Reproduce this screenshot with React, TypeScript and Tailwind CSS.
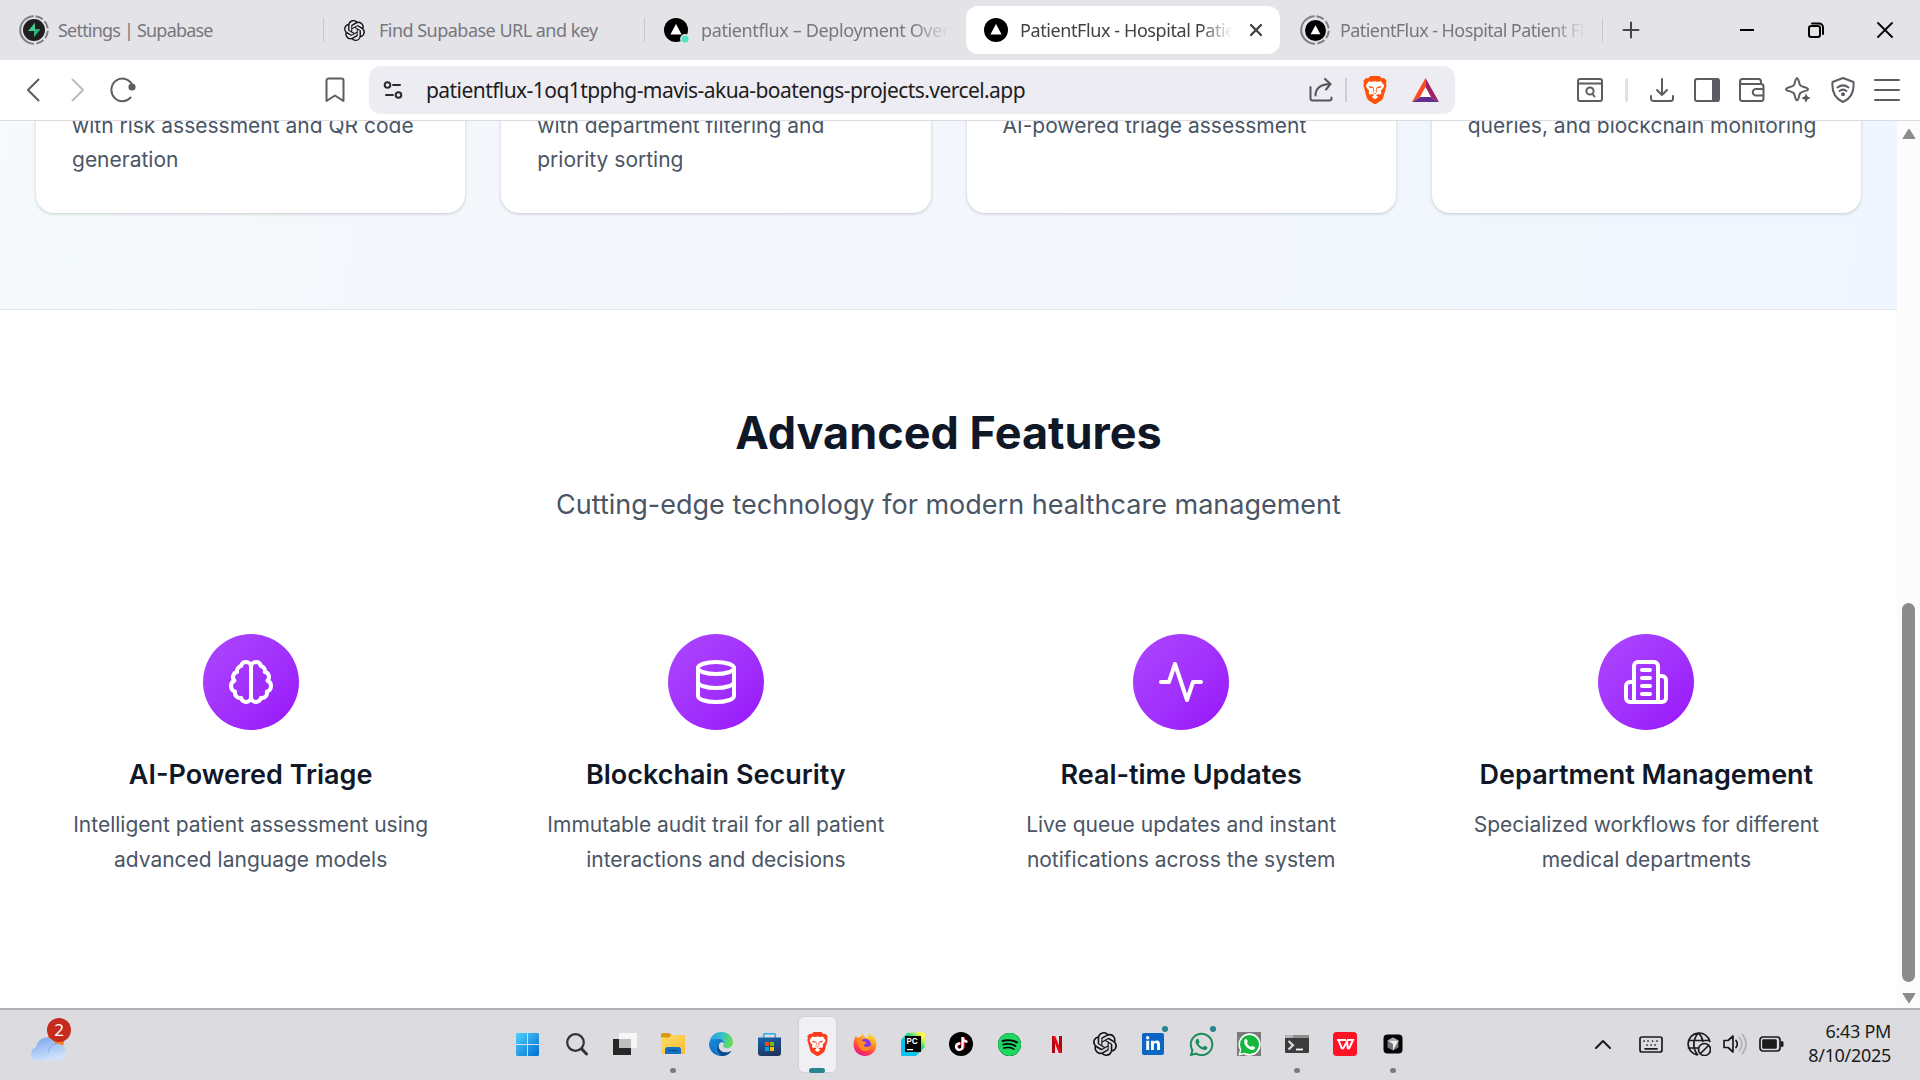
import React from "react";
import { SiSpotify, SiTiktok, SiOpenai } from "react-icons/si";
import { FaWhatsapp, FaLinkedinIn } from "react-icons/fa";

type IconProps = { className?: string; children: React.ReactNode; w?: number; h?: number; box?: string; sw?: number; color?: string };
const Svg = ({ children, w = 24, h = 24, box = "0 0 24 24", sw = 2, color = "currentColor", className }: IconProps) => (
  <svg width={w} height={h} viewBox={box} fill="none" stroke={color} strokeWidth={sw} strokeLinecap="round" strokeLinejoin="round" className={"shrink-0 " + (className ?? "")}>
    {children}
  </svg>
);

const BraveLion = ({ w, h, color, className }: { w: number; h: number; color: string; className?: string }) => (
  <svg width={w} height={h} viewBox="0 0 24 28" preserveAspectRatio="none" className={"shrink-0 " + (className ?? "")}>
    <path d="M7.500 0h9l2.300 2.300 2.200-.4L23.700 5 23 7.200l.6 2-3.400 12.600c-.4 1.300-1 2-2 2.700L12.800 28h-1.600l-5.400-3.500c-1-.7-1.600-1.400-2-2.700L.4 9.200l.6-2L.3 5 3 1.900l2.200.4z" fill={color} />
    <path d="M6 5.300l2.800.4L12 5.200l3.200.5 2.800-.4 3.200 4.300-.7 2-2.700 3.200.6 2.200-1.400 1.800-2.200-.7-1.800 1.200 2.300 1.600L12 23.300l-3.300-2.400 2.300-1.600-1.800-1.200-2.200.7-1.400-1.800.6-2.200-2.700-3.200-.7-2z" fill="#fff" />
    <path d="M5.700 10.100l4.500.9-.9 1.300-2.600-.4zM18.300 10.100l-4.500.9.9 1.300 2.600-.4zM9.900 16.600l2.100.6 2.100-.6-2.100 1.700z" fill={color} />
    <path d="M10.300 11.500l.5 3.500-1 1.500M13.700 11.500l-.5 3.500 1 1.500" stroke={color} strokeWidth=".8" fill="none" />
  </svg>
);

const VercelMark = ({ size = 24, dot = false }: { size?: number; dot?: boolean }) => (
  <svg width={size} height={size} viewBox="0 0 24 24" className="shrink-0 overflow-visible">
    <circle cx="12" cy="12" r="12" fill="#000" />
    <path d="M12 6l5.600 10.400H6.400z" fill="#fff" />
    {dot && <circle cx="21" cy="21" r="4.200" fill="#50e3c2" stroke="#e4e3e8" strokeWidth="1.400" />}
  </svg>
);

const Ringed = ({ children }: { children: React.ReactNode }) => (
  <div className="grid h-[30px] w-[30px] shrink-0 place-items-center">
    <svg width="30" height="30" viewBox="0 0 30 30" className="col-start-1 row-start-1">
      <circle cx="15" cy="15" r="13.800" fill="none" stroke="#808086" strokeWidth="2" strokeDasharray="8 2.400 8 2.400 8 2.400 8 2.400 42.700 2.400" transform="rotate(-84 15 15)" />
    </svg>
    <div className="col-start-1 row-start-1">{children}</div>
  </div>
);

const Tab = ({ icon, title, className, textClass }: { icon: React.ReactNode; title: string; className: string; textClass: string }) => (
  <div className={"flex h-12 shrink-0 items-center " + className}>
    {icon}
    <span className={"overflow-hidden whitespace-nowrap text-[18px] leading-6 " + textClass}>{title}</span>
  </div>
);

const fade = "[mask-image:linear-gradient(to_right,#000_85%,transparent)]";

const TabStrip = () => (
  <div className="flex h-[60px] shrink-0 items-center bg-[#e4e3e8] text-[#77777c]">
    <Tab
      className="w-[323px] pl-[19px]"
      textClass="ml-[9px] tracking-[-0.8px]"
      title="Settings | Supabase"
      icon={
        <Ringed>
          <svg width="22" height="22" viewBox="0 0 22 22">
            <circle cx="11" cy="11" r="11" fill="#1f1f1f" />
            <path d="M12 3.800v6.400h5.200L11 18v-6H5z" fill="#3ecf8e" />
            <path d="M11 12v6l6.200-7.800h-3z" fill="#2fae76" />
          </svg>
        </Ringed>
      }
    />
    <div className="h-6 w-px bg-[#c9c8cf]" />
    <Tab className="w-[320px] pl-[20px]" textClass="ml-[14px] tracking-[-0.52px]" title="Find Supabase URL and key" icon={<SiOpenai size={21} color="#111" />} />
    <div className="h-6 w-px bg-[#c9c8cf]" />
    <Tab className="w-[321px] pl-[19px]" textClass={"ml-[13px] w-[248px] tracking-[-0.37px] " + fade} title="patientflux – Deployment Overview" icon={<VercelMark dot />} />
    <div className="flex h-12 w-[314px] shrink-0 items-center rounded-xl bg-white text-[#414146]">
      <Tab className="pl-[18px]" textClass={"ml-[12px] w-[212px] tracking-[-0.41px] " + fade} title="PatientFlux - Hospital Patient" icon={<VercelMark />} />
      <Svg w={14} h={14} sw={2.300} box="0 0 14 14" className="ml-[17px]"><path d="M2 2l10 10M12 2L2 12" /></Svg>
    </div>
    <Tab className="w-[322px] pl-[20px]" textClass={"ml-[10px] w-[246px] tracking-[-0.58px] " + fade} title="PatientFlux - Hospital Patient Flow" icon={<Ringed><VercelMark size={21} /></Ringed>} />
    <div className="h-6 w-px bg-[#c9c8cf]" />
    <Svg w={18} h={18} sw={2} box="0 0 18 18" color="#45454a" className="ml-[19px]"><path d="M9 1.500v15M1.500 9h15" /></Svg>
    <div className="ml-auto flex items-center gap-[53px] pr-[27px] text-black">
      <Svg w={16} h={16} sw={2} box="0 0 16 16"><path d="M1 8h14" strokeLinecap="butt" /></Svg>
      <Svg w={16} h={16} sw={2} box="0 0 16 16"><rect x="1" y="4" width="11" height="11" rx="2.200" /><path d="M4 1.500h7a4 4 0 0 1 4 4V12" /></Svg>
      <Svg w={16} h={16} sw={1.800} box="0 0 16 16"><path d="M1 1l14 14M15 1L1 15" /></Svg>
    </div>
  </div>
);

const Toolbar = () => (
  <div className="flex h-[60px] shrink-0 items-center bg-white text-[#5c5d63]">
    <div className="flex w-[369px] shrink-0 items-center">
      <Svg w={14} h={24} box="0 0 14 24" sw={2} className="ml-[26px]"><path d="M12.500 1.500L2 12l10.500 10.500" /></Svg>
      <Svg w={14} h={24} box="0 0 14 24" sw={2} color="#bcbcc1" className="ml-[31px]"><path d="M1.500 1.500L12 12 1.500 22.500" /></Svg>
      <Svg w={28} h={26} box="0 0 28 26" sw={2} className="ml-[24px]">
        <path d="M22.500 6.500A11 11.300 0 1 0 21.500 20.500" />
        <circle cx="23" cy="10" r="2.600" fill="currentColor" />
      </Svg>
      <Svg w={20} h={26} box="0 0 20 26" sw={2} className="ml-[188px]"><path d="M1.500 3.500a2 2 0 0 1 2-2h13a2 2 0 0 1 2 2V24L10 18.500 1.500 24z" /></Svg>
    </div>
    <div className="flex h-12 w-[1086px] shrink-0 items-center rounded-xl bg-[#edecf2]">
      <Svg w={20} h={18} box="0 0 20 18" sw={2} color="#2c2c30" className="ml-[14px]">
        <circle cx="4.500" cy="4" r="2.800" /><path d="M10 4h7M3 14h7" /><circle cx="15.500" cy="14" r="2.800" />
      </Svg>
      <span className="ml-[23px] whitespace-nowrap text-[21px] leading-7 tracking-[-0.565px] text-[#1d1d22]">patientflux-1oq1tpphg-mavis-akua-boatengs-projects.vercel.app</span>
      <div className="ml-auto flex items-center">
        <Svg w={24} h={24} sw={2} color="#55565c"><path d="M1.500 9v11.500a2 2 0 0 0 2 2h17a2 2 0 0 0 2-2v-1M6.500 17.500c0-6.500 4-11 14.500-11.500M16 1L21.500 6 17 11.500" /></Svg>
        <div className="ml-[12px] h-6 w-[2px] bg-[#cfced5]" />
        <BraveLion w={24} h={28} color="#ff5208" className="ml-[16px]" />
        <svg width="27" height="24" viewBox="0 0 27 24" className="ml-[25px] mr-[16px]">
          <path d="M13.500 0L0 24l8.500-5 5-9z" fill="#ff4724" />
          <path d="M13.500 0L27 24l-8.500-5-5-9z" fill="#9e1f63" />
          <path d="M0 24h27l-8.500-5h-10z" fill="#662d91" />
          <path d="M13.500 9l5.500 10H8z" fill="#fff" />
        </svg>
      </div>
    </div>
    <div className="ml-auto flex items-center pr-[20px]">
      <Svg w={26} h={24} box="0 0 26 24" sw={2}><rect x="1" y="1" width="24" height="22" rx="2" /><path d="M1 5.500h24" /><circle cx="13" cy="13" r="3.600" /><path d="M15.500 16l2 2.500" /></Svg>
      <div className="ml-[22px] h-6 w-[3px] rounded bg-[#e1e0e6]" />
      <Svg w={24} h={24} sw={2} className="ml-[22px]"><path d="M12 1v16M7 12l5 5 5-5M1 18v2.500a2.500 2.500 0 0 0 2.500 2.500h17a2.500 2.500 0 0 0 2.500-2.500V18" /></Svg>
      <Svg w={26} h={24} box="0 0 26 24" sw={2} className="ml-[20px]"><rect x="1" y="1" width="24" height="22" rx="2" /><path d="M19 1h5v22h-5z" fill="currentColor" /></Svg>
      <Svg w={26} h={24} box="0 0 26 24" sw={2} className="ml-[19px]"><path d="M22 6V3.500A2.500 2.500 0 0 0 19.500 1H3.500a2.500 2.500 0 0 0 0 5H22a2.500 2.500 0 0 1 2.500 2.500v12A2.500 2.500 0 0 1 22 23H3.500A2.500 2.500 0 0 1 1 20.500V3.500M24.500 11H17a3.200 3.200 0 0 0 0 6.500h7.500" /></Svg>
      <Svg w={26} h={26} box="0 0 26 26" sw={2} className="ml-[20px]"><path d="M12 1.200c1 0 1.400 1.300 2 3.800.8 3.300 1.200 4 5 5 2.500.7 4 1.200 4 2.200s-1.500 1.500-4 2.200c-3.800 1-4.200 1.700-5 5-.6 2.500-1 3.800-2 3.800s-1.400-1.300-2-3.800c-.8-3.300-1.200-4-5-5-2.500-.7-4-1.200-4-2.200s1.500-1.500 4-2.200c3.800-1 4.200-1.700 5-5 .6-2.500 1-3.800 2-3.800z" /><path d="M21 15l1.800 4.200L27 21l-4.200 1.800L21 27l-1.800-4.200L15 21l4.200-1.800z" fill="#5c5d63" stroke="#fff" strokeWidth="1" /></Svg>
      <Svg w={24} h={26} box="0 0 24 26" sw={2} className="ml-[20px]"><path d="M12 1l10.500 4c.8 9-1.500 16-10.500 20C3 21 .7 14 1.500 5z" /><path d="M6.500 10.500c3.500-2.700 7.500-2.700 11 0M8.500 14c2.200-1.700 4.800-1.700 7 0" /><circle cx="12" cy="17.200" r="1" fill="currentColor" /></Svg>
      <Svg w={26} h={24} box="0 0 26 24" sw={2} className="ml-[19px]"><path d="M1 2h24M1 12h24M1 22h24" /></Svg>
    </div>
  </div>
);

const cards = [
  ["with risk assessment and QR code", "generation"],
  ["with department filtering and", "priority sorting"],
  ["AI-powered triage assessment", ""],
  ["queries, and blockchain monitoring", ""],
];

const features = [
  {
    title: "AI-Powered Triage",
    lines: ["Intelligent patient assessment using", "advanced language models"],
    icon: (
      <>
        <path d="M9.500 2A2.500 2.500 0 0 1 12 4.500v15a2.500 2.500 0 0 1-4.960.440 2.500 2.500 0 0 1-2.960-3.080 3 3 0 0 1-.340-5.580 2.500 2.500 0 0 1 1.320-4.240 2.500 2.500 0 0 1 1.980-3A2.500 2.500 0 0 1 9.500 2Z" />
        <path d="M14.500 2A2.500 2.500 0 0 0 12 4.500v15a2.500 2.500 0 0 0 4.960.440 2.500 2.500 0 0 0 2.960-3.080 3 3 0 0 0 .340-5.580 2.500 2.500 0 0 0-1.320-4.240 2.500 2.500 0 0 0-1.980-3A2.500 2.500 0 0 0 14.500 2Z" />
      </>
    ),
  },
  {
    title: "Blockchain Security",
    lines: ["Immutable audit trail for all patient", "interactions and decisions"],
    icon: (
      <>
        <ellipse cx="12" cy="5" rx="9" ry="3" />
        <path d="M3 5V19A9 3 0 0 0 21 19V5" />
        <path d="M3 12A9 3 0 0 0 21 12" />
      </>
    ),
  },
  {
    title: "Real-time Updates",
    lines: ["Live queue updates and instant", "notifications across the system"],
    icon: <path d="M22 12h-4l-3 9L9 3l-3 9H2" />,
  },
  {
    title: "Department Management",
    lines: ["Specialized workflows for different", "medical departments"],
    icon: (
      <>
        <path d="M6 22V4a2 2 0 0 1 2-2h8a2 2 0 0 1 2 2v18Z" />
        <path d="M6 12H4a2 2 0 0 0-2 2v6a2 2 0 0 0 2 2h2" />
        <path d="M18 9h2a2 2 0 0 1 2 2v9a2 2 0 0 1-2 2h-2" />
        <path d="M10 6h4M10 10h4M10 14h4M10 18h4" />
      </>
    ),
  },
];

const PageContent = () => (
  <main className="flex min-w-0 flex-1 flex-col overflow-hidden bg-white font-[Inter,sans-serif]">
    <section className="flex h-[189px] shrink-0 flex-col justify-end overflow-hidden border-b border-[#e2e5ea] bg-[linear-gradient(100deg,#f5fafd_0%,#f4f8fc_20%,#f3f7fd_60%,#f0f6ff_100%)] px-9 pb-24">
      <div className="grid grid-cols-4 gap-9">
        {cards.map((c) => (
          <div key={c[0]} className="h-[180px] rounded-[18px] bg-white px-9 pt-[76px] text-[21px] leading-[34px] text-[#4a5565] shadow-[0_1px_4px_rgba(0,0,0,0.12),0_1px_2px_rgba(0,0,0,0.08)]">
            <p className="whitespace-nowrap">{c[0]}</p>
            <p className="whitespace-nowrap">{c[1]}</p>
          </div>
        ))}
      </div>
    </section>
    <section className="px-9 pt-24 text-center">
      <h2 className="text-[45px] font-bold leading-[54px] text-[#101828]">Advanced Features</h2>
      <p className="mt-6 text-[27px] leading-[42px] text-[#4a5565]">Cutting-edge technology for modern healthcare management</p>
      <div className="mt-[72px] grid grid-cols-4 gap-9">
        {features.map((f) => (
          <div key={f.title} className="flex flex-col items-center py-9">
            <div className="flex h-24 w-24 items-center justify-center rounded-full bg-linear-to-br from-[#ad46ff] to-[#9810fa] text-white">
              <Svg w={48} h={48}>{f.icon}</Svg>
            </div>
            <h3 className="mt-6 whitespace-nowrap text-[27px] font-semibold leading-[42px] text-[#101828]">{f.title}</h3>
            <div className="mt-[11px] text-[21px] leading-[35px] text-[#4a5565]">
              <p className="whitespace-nowrap">{f.lines[0]}</p>
              <p className="whitespace-nowrap">{f.lines[1]}</p>
            </div>
          </div>
        ))}
      </div>
    </section>
  </main>
);

const Scrollbar = () => (
  <div className="flex w-[23px] shrink-0 flex-col items-center bg-[#fcfcfc]">
    <svg width="14" height="12" viewBox="0 0 14 12" className="mt-[7px]"><path d="M7 1L13 10.500H1z" fill="#8b8b8b" stroke="#8b8b8b" strokeLinejoin="round" /></svg>
    <div className="mt-[463px] h-[379px] w-[13px] rounded-full bg-[#8b8b8b]" />
    <svg width="14" height="12" viewBox="0 0 14 12" className="mt-[10px]"><path d="M7 11L13 1.500H1z" fill="#8b8b8b" stroke="#8b8b8b" strokeLinejoin="round" /></svg>
  </div>
);

const WindowsIcon = () => (
  <svg width="23" height="23" viewBox="0 0 23 23">
    <defs><linearGradient id="win" gradientUnits="userSpaceOnUse" x1="0" y1="0" x2="23" y2="23"><stop stopColor="#4fd0fb" /><stop offset="1" stopColor="#006ed2" /></linearGradient></defs>
    <path d="M1 0h10v11H0V1zM12 0h10l1 1v10H12zM0 12h11v11H1l-1-1zM12 12h11v10l-1 1H12z" fill="url(#win)" />
  </svg>
);
const FolderIcon = () => (
  <svg width="24" height="22" viewBox="0 0 24 22">
    <defs><linearGradient id="fold" x1="0" y1="0" x2="1" y2="1"><stop stopColor="#ffdc68" /><stop offset="1" stopColor="#f8bd32" /></linearGradient></defs>
    <path d="M0 1.500A1.500 1.500 0 0 1 1.500 0H8l2.500 2H23a1 1 0 0 1 1 1v6H0z" fill="#d79b10" />
    <path d="M0 4.500h8L10.500 2H23a1 1 0 0 1 1 1v17a1 1 0 0 1-1 1H1a1 1 0 0 1-1-1z" fill="url(#fold)" />
    <path d="M4 21v-4.500A2.500 2.500 0 0 1 6.500 14h11a2.500 2.500 0 0 1 2.500 2.500V21z" fill="#1671c4" />
    <path d="M7.500 17.500h9" stroke="#0b4a88" strokeWidth="1.200" />
  </svg>
);
const EdgeIcon = () => (
  <svg width="24" height="24" viewBox="0 0 24 24">
    <defs>
      <linearGradient id="eg1" x1="0" y1="0.300" x2="1" y2="0.500"><stop stopColor="#219ae0" /><stop offset=".5" stopColor="#35c1c8" /><stop offset="1" stopColor="#6be04a" /></linearGradient>
      <linearGradient id="eg2" x1="0" y1="0" x2="1" y2="1"><stop stopColor="#1b8ee0" /><stop offset="1" stopColor="#0a4f9e" /></linearGradient>
    </defs>
    <path d="M.3 11C1 4.500 6 0 12.200 0 19 0 24 4.800 24 10.200c0 3.600-2.600 6-5.800 6-2.800 0-4.500-1.300-4.200-2.400.2-.8.900-1.100.9-2.600C14.900 8.500 12 6.600 8.600 6.600 5 6.600 1.800 8.300.3 11z" fill="url(#eg1)" />
    <path d="M0 12c0-3.300 4-5.400 8.400-5.400 3.800 0 6.500 2 6.700 4.400-1-.9-2.400-1-3.500-.6C7.500 12 9 20.500 16.500 20.500c2.500 0 4.500-.8 5.800-1.600C20.500 22 16.500 24 12.500 24 5.500 24 0 18.800 0 12z" fill="url(#eg2)" />
    <path d="M8.600 9.500c-2.600 4.500-.4 11.500 4.200 14.300C6 23.500 3 17 5 12.500c.7-1.600 2.100-2.600 3.600-3z" fill="#1580d4" />
    <path d="M11.600 10.400c-3.600 1.500-2.600 9.600 4.900 10.100 2.500.1 4.900-.9 5.800-1.600-1 2.300-5 5-9.500 4.900C7.500 21.500 6.500 13 11.600 10.400z" fill="#0c4a90" />
  </svg>
);
const StoreIcon = () => (
  <svg width="23" height="23" viewBox="0 0 23 23">
    <defs><linearGradient id="sto" x1="0" y1="0" x2="0.400" y2="1"><stop stopColor="#1565b0" /><stop offset="1" stopColor="#21375f" /></linearGradient></defs>
    <path d="M5.700 6V1.500a.7.7 0 0 1 .7-.7h10.200a.7.7 0 0 1 .7.7V6" fill="none" stroke="#27aeea" strokeWidth="1.600" />
    <path d="M0 4.500h23V20a3 3 0 0 1-3 3H3a3 3 0 0 1-3-3z" fill="url(#sto)" />
    <path d="M7 9h4v4H7z" fill="#f25022" /><path d="M12 9h4v4h-4z" fill="#7fba00" /><path d="M7 14h4v4H7z" fill="#00a4ef" /><path d="M12 14h4v4h-4z" fill="#ffb900" />
  </svg>
);
const FirefoxIcon = () => (
  <svg width="24" height="24" viewBox="0 0 24 24">
    <defs>
      <linearGradient id="ffx" x1="0.800" y1="0" x2="0.300" y2="1"><stop stopColor="#fff14a" /><stop offset=".4" stopColor="#ff9a1f" /><stop offset=".75" stopColor="#ff3b4e" /><stop offset="1" stopColor="#e31587" /></linearGradient>
    </defs>
    <path d="M3 3.500c.3 1.200.9 1.800 1.500 2.300C5.500 5 6.500 4.800 7.500 5 7.800 3.700 8.700 2.500 10 2c-.2 1.500.3 2.500 2 3 1.200.3 2.500.5 3 1.500C15.500 4 15 2 16.500 0c.5 2.500 2 3 3.500 5 .5.500.8 0 .8-.8 1.800 2.300 2.700 5 2.700 8.300C23.500 19 18.500 24 12 24S.5 19 .5 12.500C.5 9 1.500 6 3 3.500z" fill="url(#ffx)" />
    <circle cx="12.300" cy="12.300" r="5.600" fill="#8439e6" />
    <path d="M5 8.500c3-1 4.500.2 5.200 1 1 0 2.800 0 3 .9.300 1-1.700 1.600-2.200 2.600-.4 1.200 1 2.300 3 2 2-.3 3-1.500 4.500-1-1 3.500-3.500 5-6.500 5-4.500 0-8-4.500-7-10.500z" fill="#ff8a1e" />
  </svg>
);
const PycharmIcon = () => (
  <svg width="24" height="24" viewBox="0 0 24 24">
    <defs><linearGradient id="pyc" x1="0" y1="1" x2="1" y2="0"><stop offset=".3" stopColor="#07c3f2" /><stop offset=".6" stopColor="#21d789" /><stop offset=".85" stopColor="#fcf84a" /></linearGradient></defs>
    <path d="M6 1l16-1 2 2v13l-9 9H1l-1-1V8z" fill="url(#pyc)" />
    <path d="M4 4h16v16H4z" fill="#000" />
    <text x="5.500" y="12" fontSize="8" fontWeight="700" fill="#fff" fontFamily="Inter, sans-serif">PC</text>
    <path d="M6 17h6v1.300H6z" fill="#fff" />
  </svg>
);
const Cell = ({ children, active = false, dot = false, badge = false }: { children: React.ReactNode; active?: boolean; dot?: boolean; badge?: boolean }) => (
  <div className="relative flex h-[62px] w-12 shrink-0 items-center justify-center">
    {active && <div className="absolute left-[5px] top-[3px] h-[57px] w-[39px] rounded-md border border-[#d2d1d6] bg-[#f0eff3]" />}
    <div className="relative">{children}</div>
    {active && <div className="absolute bottom-[2px] left-4 h-[5px] w-4 rounded-full bg-[#28848f]" />}
    {dot && <div className="absolute bottom-[2px] left-[21px] h-[5px] w-[6px] rounded-full bg-[#7b7b80]" />}
    {badge && <div className="absolute right-[9px] top-[13px] h-[6px] w-[6px] rounded-full bg-[#28848f]" />}
  </div>
);

const Taskbar = () => (
  <footer className="flex h-[72px] shrink-0 items-center justify-between border-t-2 border-[#b1b0b4] bg-[#dcdbe0] pb-[2px]">
    <div className="w-[504px] pl-[29px]">
      <div className="relative -mt-[8px] h-[44px] w-[42px]">
        <svg width="38" height="44" viewBox="0 0 38 44">
          <defs><linearGradient id="cl" x1="0" y1="0" x2="0.400" y2="1"><stop stopColor="#76a5ee" /><stop offset="1" stopColor="#cfe2fa" /></linearGradient></defs>
          <circle cx="26" cy="24" r="9" fill="#f58220" />
          <path d="M8 43a7.300 7.300 0 0 1-1-14C8.500 23 12.500 19.500 17.500 19.500c4.500 0 7.500 2.500 9 6.500 5.500-1.500 10.500 2.500 10.500 8.500 0 5-3.500 8.500-8 8.500z" fill="url(#cl)" />
          <path d="M19 35c1-6 4-9 8-9" fill="none" stroke="#5a8be0" strokeOpacity=".5" />
        </svg>
        <div className="absolute left-[18px] top-0 flex h-6 w-6 items-center justify-center rounded-full bg-[#c42b1c] text-[17px] text-white">2</div>
      </div>
    </div>
    <div className="flex items-center pl-[2px]">
      <div className="-ml-[2px]"><Cell><WindowsIcon /></Cell></div>
      <div className="w-[2px]" />
      <Cell><Svg w={22} h={23} box="0 0 22 23" sw={2.200} color="#333"><circle cx="9.500" cy="9.500" r="8.300" /><path d="M15.800 16L20.500 21" strokeWidth="3" /></Svg></Cell>
      <Cell>
        <svg width="24" height="22" viewBox="0 0 24 22"><path d="M0 6h18v16H0z" fill="#272727" /><path d="M6 0h18v15H6z" fill="#f8f8f8" fillOpacity=".95" /><path d="M6 6h12v9H6z" fill="#bebebe" /></svg>
      </Cell>
      <Cell dot><FolderIcon /></Cell>
      <Cell><EdgeIcon /></Cell>
      <Cell><StoreIcon /></Cell>
      <Cell active><BraveLion w={21} h={24} color="#fb3c1c" /></Cell>
      <Cell><FirefoxIcon /></Cell>
      <Cell><PycharmIcon /></Cell>
      <Cell>
        <div className="grid h-6 w-6 place-items-center rounded-full bg-black">
          <SiTiktok size={14} color="#fff" className="drop-shadow-[1px_0.500px_0_#fe2c55]" />
        </div>
      </Cell>
      <Cell><div className="h-[23px] w-[23px] rounded-full bg-black"><SiSpotify size={23} color="#1ed760" /></div></Cell>
      <Cell>
        <svg width="10" height="17" viewBox="0 0 10 17"><path d="M0 0h3v17H0zM7 0h3v17H7z" fill="#b1060f" /><path d="M0 0h3.200L10 17H6.800z" fill="#e50914" /></svg>
      </Cell>
      <Cell><SiOpenai size={24} color="#111" /></Cell>
      <Cell badge><div className="grid h-[22px] w-[22px] place-items-center rounded-[2px] bg-[#0a66c2]"><FaLinkedinIn size={16} color="#fff" /></div></Cell>
      <Cell badge><FaWhatsapp size={27} color="#1d8a58" /></Cell>
      <Cell>
        <div className="grid h-6 w-6 place-items-center bg-[#7a7a7a]">
          <svg width="23" height="23" viewBox="0 0 23 23">
            <path d="M11.500.3a11.200 11.200 0 0 1 0 22.400c-2 0-3.800-.5-5.500-1.500L.4 22.600 1.900 17A11.200 11.200 0 0 1 11.500.3z" fill="#fff" />
            <circle cx="11.500" cy="11.500" r="9.500" fill="#14b83c" /><path d="M2.500 20.500l1-5 4 4z" fill="#14b83c" />
            <path d="M7 6.300c.8-.8 1.500-.7 1.900.1l.9 2c.1.600-.5 1.100-.9 1.600 1 2 2.300 3.200 4.200 4 .5-.4.9-1.300 1.500-1.100l2.200 1.100c.7.400.2 2.200-1.200 2.700-2 .8-5-.7-6.700-2.400C7.200 12.700 5 9 7 6.300z" fill="#fff" />
          </svg>
        </div>
      </Cell>
      <Cell dot>
        <svg width="24" height="18" viewBox="0 0 24 18"><rect width="24" height="18" rx="1.200" fill="#3c3c3c" /><path d="M0 1.200A1.200 1.200 0 0 1 1.200 0H16v3H0z" fill="#b5b5b5" /><path d="M8 0h8v3H8zM16 0h6.800A1.200 1.200 0 0 1 24 1.200V3h-8z" fill="#8d8d8d" /><path d="M3.500 6l4.500 4.300-4.500 4.200" fill="none" stroke="#ddd" strokeWidth="2.200" /><path d="M11 14.500h7" stroke="#fff" strokeWidth="1.800" /></svg>
      </Cell>
      <Cell>
        <svg width="24" height="24" viewBox="0 0 24 24"><rect width="24" height="24" rx="3.500" fill="#ff1226" /><path d="M4 8h9M5.500 8l3.200 8.200h1.600L14 9.500l.8 6.700h1.400L20 8h-5.500" fill="none" stroke="#fff" strokeWidth="2" /></svg>
      </Cell>
      <Cell dot>
        <svg width="20" height="20" viewBox="0 0 20 20"><rect x=".5" y=".5" width="19" height="19" rx="4" fill="#050505" /><path d="M10 3.500l5.500 3v7l-5.500 3-5.500-3v-7z" fill="#777" /><path d="M4.500 6.500h11L10 16.500V10z" fill="#eee" /><path d="M10 3.500l5.500 3h-11z" fill="#aaa" /></svg>
      </Cell>
    </div>
    <div className="flex w-[504px] items-center justify-end pr-[29px] text-[#1b1b1b]">
      <Svg w={18} h={10} box="0 0 18 10" sw={2}><path d="M2 9l7-7 7 7" /></Svg>
      <Svg w={24} h={17} box="0 0 24 17" sw={1.700} className="ml-[27px]"><rect x="1" y="1" width="22" height="15" rx="2" /><path d="M5 5h.1M9 5h.1M13.500 5h.1M18 5h.1M8 9h.1M12 9h.1M16 9h.1M6 12.800h12" /></Svg>
      <Svg w={24} h={24} sw={1.700} className="ml-[24px]">
        <path d="M10 22.800A11 11 0 1 1 22.800 9.500M1.500 8.500h21M1.500 16h9M10.500 22.500C5.500 17 5.500 7 11.500 1c2.500 2.500 4 5.500 4.300 8.500" />
        <circle cx="17.500" cy="17.500" r="6" /><path d="M13.500 21.500l8-8" />
      </Svg>
      <Svg w={24} h={22} box="0 0 24 22" sw={1.700} className="ml-[12px]">
        <path d="M1 7.500v7h4l5 4.500V3L5 7.500zM13 7.500c1.500 2 1.500 5 0 7" /><path d="M16.500 4.500c3 4 3 9 0 13M19.500 1.500c4.500 6 4.500 13 0 19" stroke="#b3b2b7" />
      </Svg>
      <Svg w={25} h={16} box="0 0 25 16" sw={1.700} className="ml-[12px]"><rect x="1" y="1" width="20" height="14" rx="3" /><rect x="4" y="4" width="13" height="8" rx=".5" fill="currentColor" /><path d="M23 6.500v3" strokeWidth="3" /></Svg>
      <div className="-mt-[2px] ml-[23px] w-[84px] whitespace-nowrap text-right text-[18px] leading-6 tracking-[-0.3px]">
        <div>6:43 PM</div>
        <div>8/10/2025</div>
      </div>
    </div>
  </footer>
);

export default function App() {
  return (
    <div className="flex h-[1080px] w-[1920px] flex-col overflow-hidden bg-white font-['Noto_Sans','Open_Sans',sans-serif]">
      <TabStrip />
      <Toolbar />
      <div className="flex h-[888px] shrink-0 border-t border-[#dcdce0]">
        <PageContent />
        <Scrollbar />
      </div>
      <Taskbar />
    </div>
  );
}
